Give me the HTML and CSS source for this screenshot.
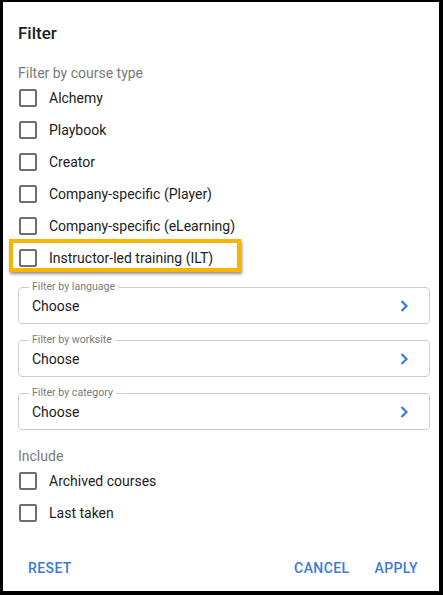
FILE: index.html
```html
<!DOCTYPE html>
<html>
<head>
<meta charset="utf-8">
<link rel="stylesheet" href="styles.css">
</head>
<body>
<div class="dialog">
  <h1 class="title">Filter</h1>
  <div class="section-label">Filter by course type</div>
  <div class="checks">
    <label class="check"><span class="box"></span><span class="text">Alchemy</span></label>
    <label class="check"><span class="box"></span><span class="text">Playbook</span></label>
    <label class="check"><span class="box"></span><span class="text">Creator</span></label>
    <label class="check"><span class="box"></span><span class="text">Company-specific (Player)</span></label>
    <label class="check"><span class="box"></span><span class="text">Company-specific (eLearning)</span></label>
    <label class="check highlight"><span class="box"></span><span class="text">Instructor-led training (ILT)</span></label>
  </div>
  <div class="fields">
    <div class="field">
      <span class="field-label">Filter by language</span>
      <span class="field-value">Choose</span>
      <svg class="chev" width="10" height="14" viewBox="0 0 10 14"><path d="M2.5 2 L7.5 7 L2.5 12" fill="none" stroke="#3b7ad6" stroke-width="2.2"/></svg>
    </div>
    <div class="field">
      <span class="field-label">Filter by worksite</span>
      <span class="field-value">Choose</span>
      <svg class="chev" width="10" height="14" viewBox="0 0 10 14"><path d="M2.5 2 L7.5 7 L2.5 12" fill="none" stroke="#3b7ad6" stroke-width="2.2"/></svg>
    </div>
    <div class="field">
      <span class="field-label">Filter by category</span>
      <span class="field-value">Choose</span>
      <svg class="chev" width="10" height="14" viewBox="0 0 10 14"><path d="M2.5 2 L7.5 7 L2.5 12" fill="none" stroke="#3b7ad6" stroke-width="2.2"/></svg>
    </div>
  </div>
  <div class="section-label include">Include</div>
  <div class="checks">
    <label class="check"><span class="box"></span><span class="text">Archived courses</span></label>
    <label class="check"><span class="box"></span><span class="text">Last taken</span></label>
  </div>
  <div class="footer">
    <button class="btn">RESET</button>
    <div class="spacer"></div>
    <button class="btn">CANCEL</button>
    <button class="btn">APPLY</button>
  </div>
</div>
</body>
</html>
```
FILE: styles.css
```css
html, body {
  margin: 0;
  padding: 0;
  background: #000;
}
body {
  padding: 2px 4px 4px 3px;
  width: 443px;
  height: 595px;
  box-sizing: border-box;
  font-family: Roboto, "Liberation Sans", sans-serif;
}
.dialog {
  background: #fff;
  height: 589px;
  box-sizing: border-box;
  padding: 0 9px 5px 15px;
  display: flex;
  flex-direction: column;
}
.title {
  margin: 0;
  padding-top: 19px;
  font-size: 17px;
  line-height: 24px;
  font-weight: 500;
  color: #212121;
}
.section-label {
  margin-top: 19px;
  font-size: 14px;
  line-height: 18px;
  color: #7a7a7a;
}
.section-label.include {
  margin-top: 17px;
}
.checks {
  display: flex;
  flex-direction: column;
}
.check {
  display: flex;
  align-items: center;
  height: 32px;
  position: relative;
}
.box {
  width: 18px;
  height: 18px;
  box-sizing: border-box;
  border: 2px solid #6e6e6e;
  border-radius: 2px;
  margin-left: 1px;
}
.text {
  margin-left: 12px;
  font-size: 14px;
  color: #212121;
}
.highlight::after {
  content: "";
  position: absolute;
  left: -9px;
  top: -3px;
  width: 232px;
  height: 33px;
  box-sizing: border-box;
  border: 4px solid #f7b500;
  box-shadow: 1px 2px 3px rgba(0,0,0,0.45);
}
.fields {
  margin-top: 13px;
  display: flex;
  flex-direction: column;
  gap: 16px;
}
.field {
  position: relative;
  height: 37px;
  box-sizing: border-box;
  border: 1px solid #cfcfcf;
  border-radius: 4px;
  display: flex;
  align-items: center;
  padding: 0 20px 0 13px;
}
.field-label {
  position: absolute;
  left: 10px;
  top: -7px;
  padding: 0 3px;
  background: #fff;
  font-size: 10.6px;
  line-height: 12px;
  color: #7a7a7a;
}
.field-value {
  flex: 1;
  font-size: 14px;
  color: #212121;
  padding-top: 1px;
}
.chev {
  display: block;
}
.footer {
  margin-top: auto;
  display: flex;
  align-items: center;
  height: 36px;
}
.spacer { flex: 1; }
.btn {
  background: none;
  border: none;
  font-family: Roboto, "Liberation Sans", sans-serif;
  font-size: 14px;
  font-weight: 500;
  letter-spacing: 0.4px;
  color: #3b7ad6;
  padding: 0 12px;
  height: 36px;
}
.btn:first-child { padding-left: 10px; }
.btn + .btn { margin-left: 1px; }
```
